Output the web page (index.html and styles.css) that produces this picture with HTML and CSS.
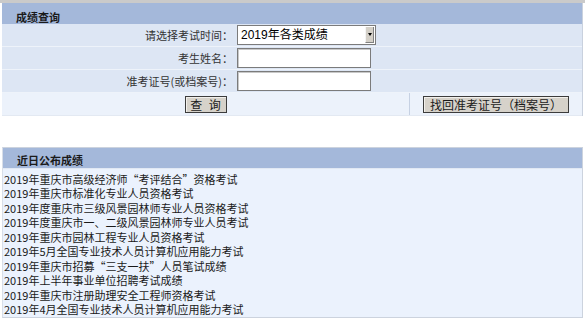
FILE: index.html
```html
<!DOCTYPE html>
<html lang="zh-CN">
<head>
<meta charset="utf-8">
<title>成绩查询</title>
<link rel="stylesheet" href="styles.css">
</head>
<body>
<div class="topbar"></div>
<div class="panel query">
  <div class="panel-head">成绩查询</div>
  <div class="row">
    <div class="label">请选择考试时间：</div>
    <div class="field">
      <div class="select-box"><span class="select-text">2019年各类成绩</span><span class="select-btn"><span class="tri"></span></span></div>
    </div>
  </div>
  <div class="row">
    <div class="label">考生姓名：</div>
    <div class="field"><input class="text-input" type="text"></div>
  </div>
  <div class="row">
    <div class="label">准考证号(或档案号)：</div>
    <div class="field"><input class="text-input" type="text"></div>
  </div>
  <div class="row actions">
    <div class="act-cell"><button class="btn btn-query" type="button">查 询</button></div>
    <div class="act-cell divider"><button class="btn" type="button">找回准考证号（档案号）</button></div>
  </div>
</div>

<div class="panel recent">
  <div class="panel-head head2">近日公布成绩</div>
  <ul class="list">
    <li>2019年重庆市高级经济师“考评结合”资格考试</li>
    <li>2019年重庆市标准化专业人员资格考试</li>
    <li>2019年度重庆市三级风景园林师专业人员资格考试</li>
    <li>2019年度重庆市一、二级风景园林师专业人员考试</li>
    <li>2019年重庆市园林工程专业人员资格考试</li>
    <li>2019年5月全国专业技术人员计算机应用能力考试</li>
    <li>2019年重庆市招募“三支一扶”人员笔试成绩</li>
    <li>2019年上半年事业单位招聘考试成绩</li>
    <li>2019年重庆市注册助理安全工程师资格考试</li>
    <li>2019年4月全国专业技术人员计算机应用能力考试</li>
  </ul>
</div>
</body>
</html>
```

FILE: styles.css
```css
html, body {
  margin: 0;
  padding: 0;
  background: #ffffff;
}
body {
  font-family: "Noto Sans CJK SC", "Liberation Sans", sans-serif;
  color: #1a1a1a;
  font-size: 12px;
}
.topbar {
  height: 3px;
  background: #cacaca;
}
.panel {
  margin: 0 2px 0 2px;
  border-right: 1px solid #c9d1de;
}
.panel-head {
  height: 21px;
  box-sizing: border-box;
  padding: 8px 0 0 14px;
  line-height: 13px;
  font-size: 11px;
  font-weight: bold;
  color: #1a1a1a;
  background: #a4b8da;
}
.row {
  display: grid;
  grid-template-columns: 232px 1fr;
  height: 23px;
  box-sizing: border-box;
  border-bottom: 1px solid #eef3fa;
  background: #dde6f4;
}
.label {
  text-align: right;
  padding-right: 1px;
  line-height: 22px;
  font-size: 11px;
  color: #333;
  white-space: nowrap;
}
.field {
  display: flex;
  align-items: center;
  padding-left: 3px;
}
.select-box {
  display: flex;
  align-items: center;
  width: 139px;
  height: 20px;
  box-sizing: border-box;
  border: 1px solid #7b7b7b;
  background: #fff;
  padding: 1px;
}
.select-text {
  flex: 1;
  font-size: 12px;
  line-height: 16px;
  padding-left: 2px;
  color: #000;
  font-family: "Liberation Sans", "Noto Sans CJK SC", sans-serif;
}
.select-btn {
  width: 9px;
  height: 16px;
  background: #d4d0c8;
  border-left: 1px solid #f4f4f4;
  border-right: 1px solid #808080;
  border-bottom: 1px solid #808080;
  box-sizing: border-box;
  display: flex;
  align-items: center;
  justify-content: center;
}
.tri {
  width: 0;
  height: 0;
  border-left: 2px solid transparent;
  border-right: 2px solid transparent;
  border-top: 3px solid #000;
}
.text-input {
  width: 134px;
  height: 20px;
  box-sizing: border-box;
  margin: 0;
  border: 1px solid #7b7b7b;
  box-shadow: inset 1px 1px 0 #c8c8c8;
  background: #fff;
  padding: 0 2px;
}
.actions {
  grid-template-columns: 407px 1fr;
  background: #ecf2fb;
  border-bottom: 1px solid #e3e9f2;
}
.act-cell {
  display: flex;
  align-items: center;
  justify-content: center;
}
.divider {
  border-left: 1px solid #c6d1e3;
}
.btn {
  margin: 0;
  height: 17px;
  padding: 0 6px;
  box-sizing: border-box;
  border: 1px solid #3c3c3c;
  background: #d6d2ca;
  box-shadow: inset 1px 1px 0 #f2f0ec;
  font-family: "Noto Sans CJK SC", sans-serif;
  font-size: 12px;
  line-height: 15px;
  color: #1a1a1a;
}
.btn-query {
  width: 42px;
  padding: 0;
  word-spacing: 4px;
}
.recent {
  margin-top: 31px;
  border: 1px solid #ccd3de;
  border-left-color: #d8dee8;
  background: #ebf2fd;
}
.head2 {
  padding-top: 5px;
  line-height: 14px;
  height: 21px;
  border-bottom: 1px solid #e1e8f3;
}
.list {
  list-style: none;
  margin: 0;
  padding: 3px 0 0 1px;
  font-size: 11px;
  line-height: 14.45px;
  color: #1a1a1a;
}
.list li {
  white-space: nowrap;
}
```
